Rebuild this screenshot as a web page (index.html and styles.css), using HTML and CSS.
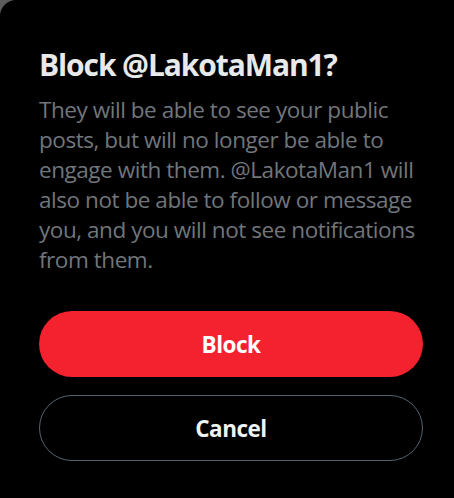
FILE: index.html
```html
<!DOCTYPE html>
<html lang="en">
<head>
<meta charset="utf-8">
<title>Block @LakotaMan1?</title>
<link rel="stylesheet" href="styles.css">
</head>
<body>
<div class="modal">
  <h1 class="title">Block @LakotaMan1?</h1>
  <p class="desc">They will be able to see your public posts, but will no longer be able to engage with them. @LakotaMan1 will also not be able to follow or message you, and you will not see notifications from them.</p>
  <div class="actions">
    <button class="btn btn-block">Block</button>
    <button class="btn btn-cancel">Cancel</button>
  </div>
</div>
</body>
</html>
```
FILE: styles.css
```css
html, body {
  margin: 0;
  padding: 0;
  background: #5c5c5c;
}
.modal {
  box-sizing: border-box;
  width: 454px;
  height: 498px;
  background: #000;
  border-top-left-radius: 16px;
  padding: 47px 31px 0 39px;
  font-family: "Open Sans", "Noto Sans", sans-serif;
}
.title {
  margin: 0;
  font-size: 30px;
  line-height: 36px;
  font-weight: 700;
  color: #e7e9ea;
  letter-spacing: -1.1px;
}
.desc {
  margin: 12px 0 0;
  font-size: 22.5px;
  line-height: 30px;
  color: #71767b;
  letter-spacing: -0.45px;
}
.actions {
  margin-top: 36px;
  display: flex;
  flex-direction: column;
  gap: 18px;
}
.btn {
  box-sizing: border-box;
  height: 66px;
  border-radius: 9999px;
  font-family: inherit;
  font-size: 22.5px;
  font-weight: 700;
  letter-spacing: -0.5px;
  cursor: pointer;
  display: flex;
  align-items: center;
  justify-content: center;
}
.btn-block {
  background: #f4212e;
  border: none;
  color: #fff;
}
.btn-cancel {
  background: transparent;
  border: 1.5px solid #536471;
  color: #eff3f4;
}
```
